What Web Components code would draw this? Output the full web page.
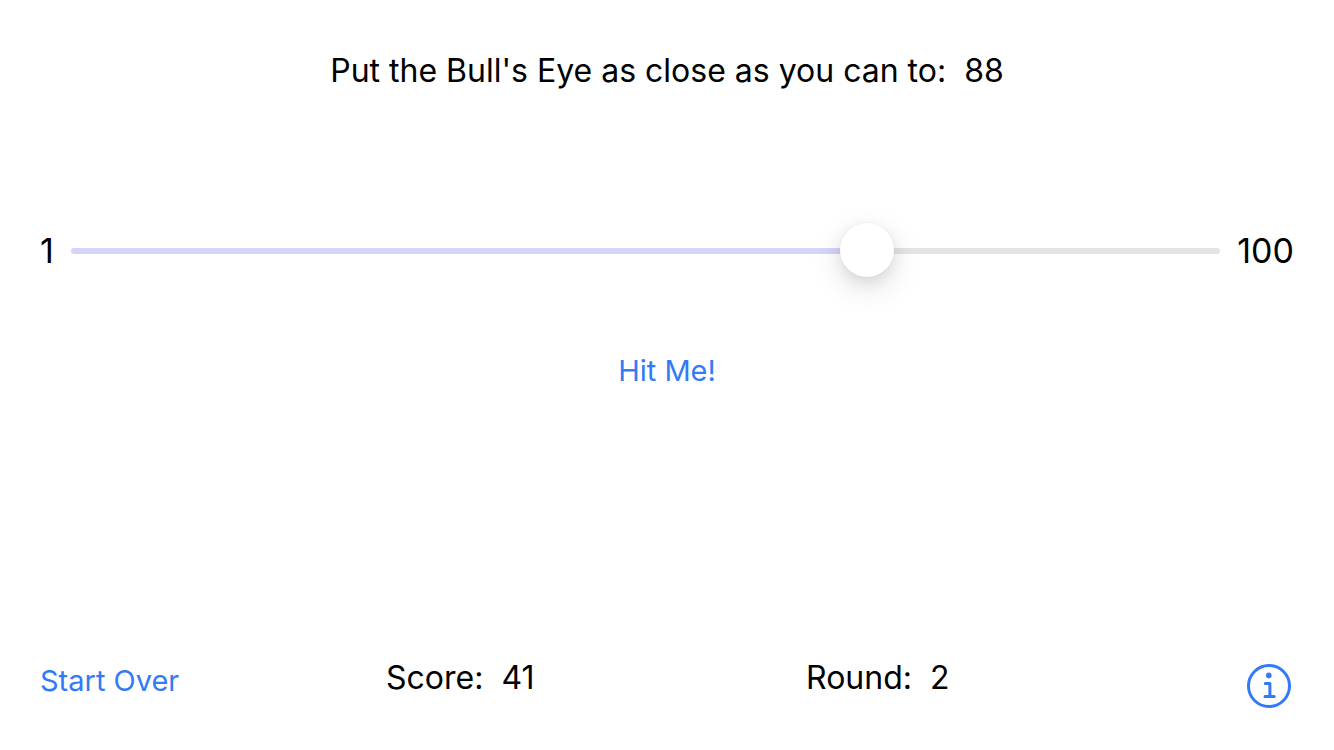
<!DOCTYPE html>
<html lang="en">
<head>
<meta charset="utf-8">
<title>Bull's Eye</title>
<style>
body { margin: 0; background: #fff; }
</style>
</head>
<body>
<bulls-eye-game></bulls-eye-game>
<script>
class GameStat extends HTMLElement {
  constructor() {
    super();
    this.attachShadow({ mode: 'open' }).innerHTML = `
      <style>
        :host { display: flex; gap: 18px; font-size: 32px; line-height: 40px; color: #000; white-space: nowrap; }
      </style>
      <slot name="label"></slot><slot></slot>`;
  }
}
customElements.define('game-stat', GameStat);

class TextButton extends HTMLElement {
  constructor() {
    super();
    this.attachShadow({ mode: 'open' }).innerHTML = `
      <style>
        :host { display: block; }
        button { display: block; margin: 0; padding: 0; border: 0; background: none; color: #327af6; font: inherit; font-size: 29px; line-height: 36px; white-space: nowrap; cursor: pointer; }
      </style>
      <button type="button"><slot></slot></button>`;
  }
}
customElements.define('text-button', TextButton);

class InfoButton extends HTMLElement {
  constructor() {
    super();
    this.attachShadow({ mode: 'open' }).innerHTML = `
      <style>
        :host { display: block; }
        button { display: block; margin: 0; padding: 0; border: 0; background: none; color: #327af6; cursor: pointer; }
        svg { display: block; width: 44px; height: 44px; }
      </style>
      <button type="button" aria-label="Info">
        <svg viewBox="0 0 44 44" fill="none" stroke="currentColor" stroke-width="3" stroke-linecap="round" stroke-linejoin="round">
          <circle cx="22" cy="22" r="20.5"/>
          <circle cx="21.8" cy="11.4" r="2.8" fill="currentColor" stroke="none"/>
          <path d="M18.300 19.500h4.600v13M18 32.500h9.200"/>
        </svg>
      </button>`;
  }
}
customElements.define('info-button', InfoButton);

class TargetSlider extends HTMLElement {
  constructor() {
    super();
    this.attachShadow({ mode: 'open' }).innerHTML = `
      <style>
        :host { display: flex; align-items: center; gap: 17px; font-size: 34px; line-height: 40px; color: #000; }
        input { flex: 1; min-width: 0; height: 54px; margin: 0; appearance: none; background: none; --fill: 69%; }
        input::-webkit-slider-runnable-track { height: 6px; border-radius: 3px; background: linear-gradient(to right, #d5d4f9 var(--fill), #e4e4e5 var(--fill)); }
        input::-webkit-slider-thumb { appearance: none; width: 54px; height: 54px; margin-top: -25px; border: 0; border-radius: 50%; background: #fff; box-shadow: 0 0 2px rgba(0,0,0,.06), 0 10px 32px rgba(0,0,0,.13), 0 5px 14px rgba(0,0,0,.08); }
      </style>
      <span>1</span>
      <input type="range" min="1" max="100" step="0.1" value="70.5" aria-label="Guess">
      <span>100</span>`;
    const input = this.shadowRoot.querySelector('input');
    input.addEventListener('input', () => input.style.setProperty('--fill', (input.value - 1) / 99 * 100 + '%'));
  }
}
customElements.define('target-slider', TargetSlider);

class BullsEyeGame extends HTMLElement {
  constructor() {
    super();
    this.attachShadow({ mode: 'open' }).innerHTML = `
      <style>
        :host { display: flex; flex-direction: column; box-sizing: border-box; min-height: 100vh; padding: 51px 40px 42px; font-family: Inter, sans-serif; }
        .prompt { align-self: center; }
        target-slider { margin-top: 133px; }
        .hit { align-self: center; margin-top: 75px; }
        footer { display: grid; grid-template-columns: 346fr 420fr 441fr 44px; align-items: start; margin-top: auto; padding-right: 3px; }
        footer text-button { margin-top: 5px; }
        info-button { margin-top: 6px; }
      </style>
      <game-stat class="prompt"><span slot="label">Put the Bull's Eye as close as you can to:</span>88</game-stat>
      <target-slider></target-slider>
      <text-button class="hit">Hit Me!</text-button>
      <footer>
        <text-button>Start Over</text-button>
        <game-stat><span slot="label">Score:</span>41</game-stat>
        <game-stat><span slot="label">Round:</span>2</game-stat>
        <info-button></info-button>
      </footer>`;
  }
}
customElements.define('bulls-eye-game', BullsEyeGame);
</script>
</body>
</html>
